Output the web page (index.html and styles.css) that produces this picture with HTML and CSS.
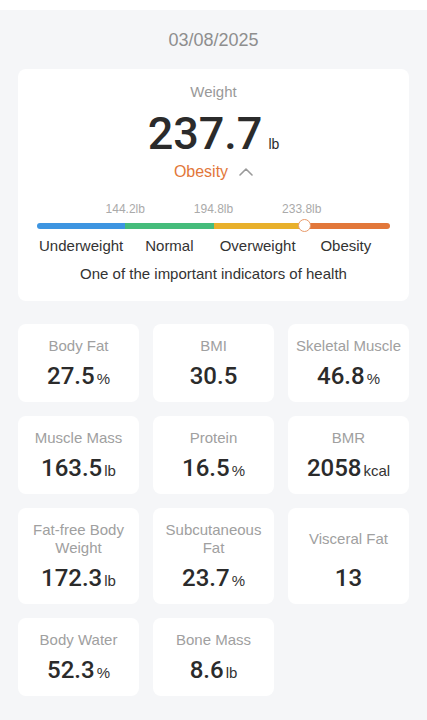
FILE: index.html
```html
<!DOCTYPE html>
<html>
<head>
    <title>Body Composition</title>
    <meta charset="UTF-8">
    <meta name="viewport" content="width=device-width, initial-scale=1.0">
    <link rel="stylesheet" href="styles.css">
</head>
<body>
    <div class="topbar"></div>
    <div class="page">
        <div class="date">03/08/2025</div>

        <div class="weight-card">
            <div class="weight-title">Weight</div>
            <div class="weight-value">237.7<span class="weight-unit">lb</span></div>
            <div class="weight-status">
                Obesity
                <svg class="chevron" width="14" height="8" viewBox="0 0 14 8">
                    <polyline points="1,7 7,1 13,7" fill="none" stroke="#9a9a9a" stroke-width="1.6" stroke-linecap="round" stroke-linejoin="round"/>
                </svg>
            </div>

            <div class="scale">
                <div class="scale-marks">
                    <span class="mark" style="left: 25%">144.2lb</span>
                    <span class="mark" style="left: 50%">194.8lb</span>
                    <span class="mark" style="left: 75%">233.8lb</span>
                </div>
                <div class="bar-wrap">
                    <div class="bar">
                        <div class="seg blue"></div>
                        <div class="seg green"></div>
                        <div class="seg yellow"></div>
                        <div class="seg orange"></div>
                    </div>
                    <div class="handle" style="left: 75.8%"></div>
                </div>
                <div class="scale-labels">
                    <span>Underweight</span>
                    <span>Normal</span>
                    <span>Overweight</span>
                    <span>Obesity</span>
                </div>
            </div>
            <div class="weight-desc">One of the important indicators of health</div>
        </div>

        <div class="metrics">
            <div class="metric">
                <div class="metric-name">Body Fat</div>
                <div class="metric-value">27.5<span class="unit">%</span></div>
            </div>
            <div class="metric">
                <div class="metric-name">BMI</div>
                <div class="metric-value">30.5</div>
            </div>
            <div class="metric">
                <div class="metric-name">Skeletal Muscle</div>
                <div class="metric-value">46.8<span class="unit">%</span></div>
            </div>
            <div class="metric">
                <div class="metric-name">Muscle Mass</div>
                <div class="metric-value">163.5<span class="unit">lb</span></div>
            </div>
            <div class="metric">
                <div class="metric-name">Protein</div>
                <div class="metric-value">16.5<span class="unit">%</span></div>
            </div>
            <div class="metric">
                <div class="metric-name">BMR</div>
                <div class="metric-value">2058<span class="unit">kcal</span></div>
            </div>
            <div class="metric">
                <div class="metric-name">Fat-free Body<br>Weight</div>
                <div class="metric-value">172.3<span class="unit">lb</span></div>
            </div>
            <div class="metric">
                <div class="metric-name">Subcutaneous<br>Fat</div>
                <div class="metric-value">23.7<span class="unit">%</span></div>
            </div>
            <div class="metric">
                <div class="metric-name">Visceral Fat</div>
                <div class="metric-value">13</div>
            </div>
            <div class="metric">
                <div class="metric-name">Body Water</div>
                <div class="metric-value">52.3<span class="unit">%</span></div>
            </div>
            <div class="metric">
                <div class="metric-name">Bone Mass</div>
                <div class="metric-value">8.6<span class="unit">lb</span></div>
            </div>
        </div>
    </div>
</body>
</html>
```

FILE: styles.css
```css
body {
    margin: 0;
    font-family: "Liberation Sans", Arial, sans-serif;
    background-color: #f5f6f8;
    color: #333;
}
.topbar {
    height: 10px;
    background-color: #fff;
}
.page {
    padding: 19px 18px 26px;
}
.date {
    text-align: center;
    font-size: 18px;
    line-height: 22px;
    color: #8e8e8e;
    margin-bottom: 18px;
}
.weight-card {
    background-color: #fff;
    border-radius: 8px;
    padding: 14px 19px 18px;
    text-align: center;
}
.weight-title {
    font-size: 15px;
    line-height: 18px;
    color: #999;
}
.weight-value {
    margin-top: 10px;
    font-family: Roboto, "Liberation Sans", sans-serif;
    font-size: 45px;
    line-height: 45px;
    font-weight: 500;
    color: #2b2b2b;
}
.weight-unit {
    font-family: "Liberation Sans", Arial, sans-serif;
    font-size: 14px;
    line-height: 14px;
    font-weight: normal;
    margin-left: 6px;
}
.weight-status {
    margin-top: 6px;
    font-size: 16px;
    line-height: 20px;
    color: #e2773a;
    display: flex;
    justify-content: center;
    align-items: center;
    gap: 11px;
}
.chevron {
    margin-top: -1px;
}
.scale {
    margin-top: 20px;
}
.scale-marks {
    position: relative;
    height: 14px;
}
.mark {
    position: absolute;
    top: 0;
    transform: translateX(-50%);
    font-size: 12px;
    line-height: 14px;
    color: #aaa;
}
.bar-wrap {
    position: relative;
    margin-top: 7px;
}
.bar {
    display: flex;
    height: 6px;
    border-radius: 3px;
    overflow: hidden;
}
.seg {
    flex: 1;
}
.blue { background-color: #3d95e1; }
.green { background-color: #45bc7b; }
.yellow { background-color: #e8b02b; }
.orange { background-color: #e2773a; }
.handle {
    position: absolute;
    top: -4px;
    width: 11px;
    height: 11px;
    margin-left: -7px;
    border: 1.5px solid #e89a6a;
    border-radius: 50%;
    background-color: #fff;
}
.scale-labels {
    margin-top: 8px;
    display: grid;
    grid-template-columns: repeat(4, 1fr);
    font-size: 15px;
    line-height: 18px;
    color: #333;
}
.weight-desc {
    margin-top: 10px;
    font-size: 15px;
    line-height: 18px;
    color: #333;
}
.metrics {
    margin-top: 23px;
    display: grid;
    grid-template-columns: repeat(3, 1fr);
    gap: 14px;
}
.metric {
    background-color: #fff;
    border-radius: 8px;
    padding: 13px 4px 12px;
    display: flex;
    flex-direction: column;
    align-items: stretch;
    gap: 7px;
    text-align: center;
}
.metric-name {
    flex: 1;
    display: flex;
    align-items: center;
    justify-content: center;
    font-size: 15px;
    line-height: 18px;
    color: #a0a0a0;
}
.metric-value {
    font-family: Roboto, "Liberation Sans", sans-serif;
    font-size: 24px;
    line-height: 28px;
    font-weight: 500;
    color: #2b2b2b;
}
.unit {
    font-family: "Liberation Sans", Arial, sans-serif;
    font-size: 15px;
    line-height: 15px;
    font-weight: normal;
    margin-left: 2px;
    color: #333;
}
```
